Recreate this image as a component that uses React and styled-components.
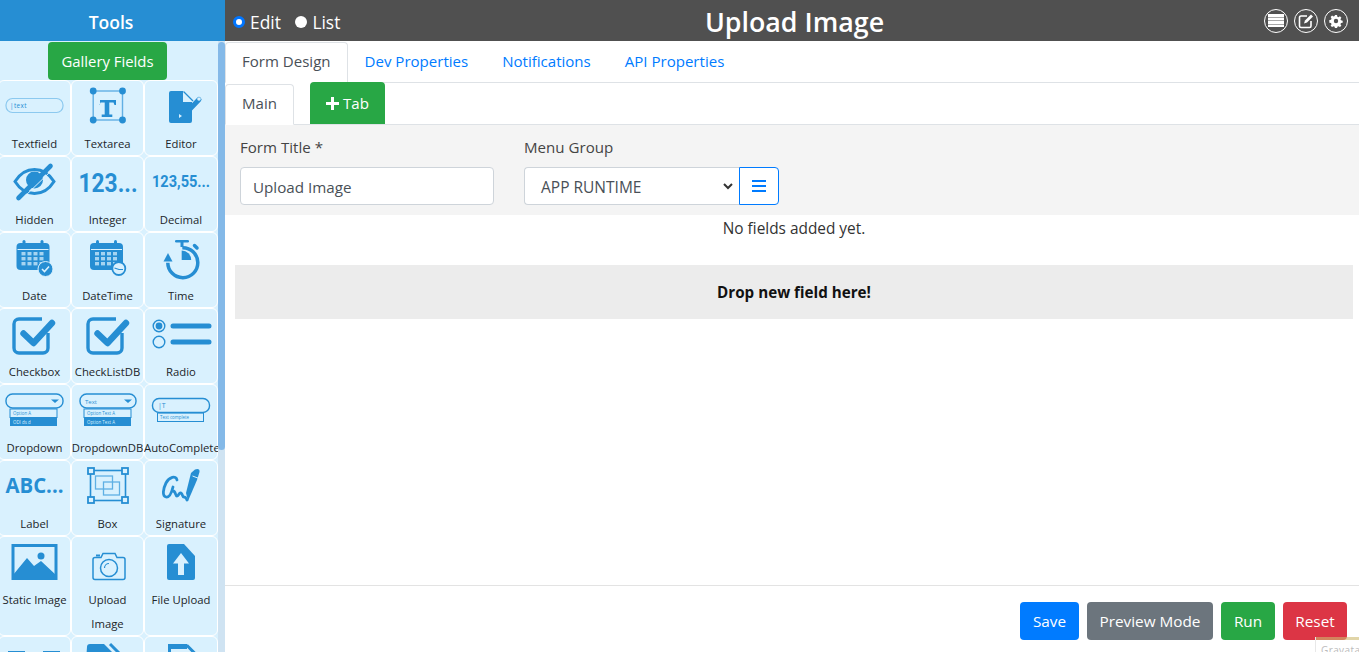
import React from "react";
import styled, { createGlobalStyle } from "styled-components";

const BLUE = "#268ed3";
const PALE = "#d9f1fe";
const FONT = `"Open Sans", "Noto Sans", "Liberation Sans", sans-serif`;

const GlobalStyle = createGlobalStyle`
  html, body { margin: 0; padding: 0; height: 100%; overflow: hidden; }
  body { font-family: ${FONT}; color: #212529; background: #fff; }
  * { box-sizing: border-box; }
`;

const Page = styled.div`
  display: flex;
  height: 100vh;
  position: relative;
  overflow: hidden;
`;

const Sidebar = styled.aside`
  width: 225px;
  flex: none;
  display: flex;
  flex-direction: column;
`;

const SidebarTitle = styled.div`
  height: 41px;
  flex: none;
  background: ${BLUE};
  color: #fff;
  font-size: 17.5px;
  font-weight: 600;
  line-height: 45px;
  text-align: center;
  padding-right: 3px;
`;

const SidebarBody = styled.div`
  flex: 1;
  min-height: 0;
  position: relative;
  overflow: hidden;
  background: ${PALE};
  padding-top: 1px;
`;

const ScrollTrack = styled.div`
  position: absolute;
  top: 0;
  right: 0;
  bottom: 0;
  width: 7px;
  background: #cfe3f2;
`;

const ScrollThumb = styled.div`
  height: 408px;
  margin-top: 1px;
  background: #84b9e8;
  border-radius: 4px;
`;

const GalleryButton = styled.button`
  display: block;
  width: 119px;
  height: 38px;
  margin: 0 0 0 48px;
  border: 0;
  border-radius: 4px;
  background: #28a745;
  color: #fff;
  font: 14.9px ${FONT};
`;

const FieldGrid = styled.div`
  display: grid;
  grid-template-columns: 73px 73px 74px;
  margin-left: -2px;
`;

const FieldCell = styled.div`
  min-height: 76px;
  border: 1px solid #fff;
  border-radius: 6px;
  background: ${PALE};
  text-align: center;
`;

const FieldIcon = styled.svg`
  display: block;
  width: 72px;
  height: 51px;
  margin: 0 auto;
  overflow: visible;
  position: relative;
  left: ${(p) => p.$shift || 0}px;
`;

const FieldLabel = styled.div`
  font-size: 11.3px;
  line-height: 24px;
  white-space: ${(p) => (p.$wrap ? "normal" : "nowrap")};
  color: #212529;
  margin: 0 -1px -1px;
  overflow: hidden;
  padding: ${(p) => (p.$wrap ? "0 8px" : "0")};
`;

const Main = styled.main`
  flex: 1;
  min-width: 0;
  display: flex;
  flex-direction: column;
`;

const TopBar = styled.header`
  height: 41px;
  flex: none;
  background: #505050;
  color: #fff;
  display: grid;
  grid-template-columns: 1fr auto 1fr;
  align-items: center;
  padding: 3px 3px 0 8px;
`;

const ModeGroup = styled.div`
  display: flex;
  align-items: center;
  font-size: 17.4px;
  gap: 14.5px;
  margin-top: -1px;
`;

const ModeOption = styled.label`
  display: flex;
  align-items: center;
  gap: 5px;
`;

const ModeDot = styled.span`
  width: 12px;
  height: 12px;
  border-radius: 50%;
  background: #fff;
  border: ${(p) => (p.$on ? "3px solid #0075ff" : "0")};
`;

const PageTitle = styled.h1`
  margin: 0;
  font-size: 26.8px;
  font-weight: 600;
  line-height: 1;
`;

const ToolIcons = styled.div`
  display: flex;
  justify-content: flex-end;
  gap: 6px;
  margin-right: 8px;
  margin-top: -3px;
`;

const RoundTool = styled.span`
  width: 24px;
  height: 24px;
  border: 1.5px solid #fff;
  border-radius: 50%;
  display: flex;
  align-items: center;
  justify-content: center;
`;

const TabRow = styled.nav`
  height: 42px;
  flex: none;
  display: flex;
  align-items: flex-end;
  border-bottom: 1px solid #dee2e6;
`;

const Tab = styled.span`
  height: 100%;
  padding: 0 16px ${(p) => (p.$active ? 3 : 2)}px;
  margin-bottom: ${(p) => (p.$active ? "-1px" : 0)};
  display: flex;
  align-items: center;
  font-size: 15.05px;
  color: ${(p) => (p.$active ? "#495057" : "#007bff")};
  background: ${(p) => (p.$active ? "#fff" : "transparent")};
  border: 1px solid ${(p) => (p.$active ? "#dee2e6" : "transparent")};
  border-bottom-color: ${(p) => (p.$active ? "#fff" : "transparent")};
  border-radius: 4px 4px 0 0;
`;

const AddTab = styled.button`
  width: 75px;
  height: 42px;
  margin-left: 16px;
  border: 0;
  border-radius: 4px 4px 0 0;
  background: #28a745;
  color: #fff;
  font: 15.05px ${FONT};
  display: flex;
  align-items: center;
  justify-content: center;
  gap: 4px;
`;

const FormPanel = styled.section`
  height: 90px;
  flex: none;
  background: #f4f4f4;
  display: flex;
  gap: 30px;
  padding: 11px 15px 0;
`;

const FormField = styled.div`
  width: ${(p) => p.$w}px;
`;

const FieldName = styled.div`
  font-size: 15.1px;
  line-height: 22px;
  margin-bottom: 9px;
  color: #444;
`;

const TextInput = styled.div`
  height: 38px;
  border: 1px solid #ced4da;
  border-radius: 4px;
  background: #fff;
  color: #495057;
  font-size: 15.2px;
  line-height: 38px;
  padding-left: 12px;
`;

const SelectRow = styled.div`
  display: flex;
`;

const SelectBox = styled.div`
  flex: 1;
  height: 38px;
  border: 1px solid #ced4da;
  border-right: 0;
  border-radius: 4px 0 0 4px;
  background: #fff;
  color: #495057;
  font-size: 15.5px;
  padding: 1px 6px 0 16px;
  display: flex;
  align-items: center;
  justify-content: space-between;
`;

const MenuButton = styled.span`
  width: 40px;
  height: 38px;
  border: 1px solid #007bff;
  border-radius: 0 4px 4px 0;
  background: #fff;
  display: flex;
  align-items: center;
  justify-content: center;
`;

const Canvas = styled.section`
  flex: 1;
  min-height: 0;
  padding: 0 6px 0 10px;
`;

const EmptyNote = styled.p`
  margin: 0;
  height: 50px;
  font-size: 15.4px;
  line-height: 28px;
  text-align: center;
  color: #333;
`;

const DropZone = styled.div`
  height: 54px;
  background: #ececec;
  color: #111;
  font-size: 15.2px;
  font-weight: 700;
  display: flex;
  align-items: center;
  justify-content: center;
`;

const Footer = styled.footer`
  height: 67px;
  flex: none;
  border-top: 1px solid #e3e3e3;
  display: flex;
  justify-content: flex-end;
  gap: 8px;
  padding: 16px 12px 0;
`;

const ActionButton = styled.button`
  width: ${(p) => p.$w}px;
  height: 38px;
  border: 0;
  border-radius: 4px;
  background: ${(p) => p.$bg};
  color: #fff;
  font: 15.3px ${FONT};
  padding: 0;
`;

const GravatarBadge = styled.div`
  position: absolute;
  right: 0;
  bottom: 0;
  width: 44px;
  height: 15px;
  background: linear-gradient(rgba(205, 185, 110, 0.6) 3px, rgba(255, 255, 255, 0.9) 3px);
  border-left: 1px solid #e8e8e8;
  color: #bbb;
  font-size: 10px;
  letter-spacing: 0.4px;
  line-height: 12px;
  padding: 7px 0 0 5px;
  overflow: hidden;
  white-space: nowrap;
`;

const Calendar = () => (
  <>
    <rect x="0" y="3" width="33" height="27" rx="4" fill={BLUE} />
    <rect x="6" y="0" width="3" height="6" rx="1.5" fill={BLUE} />
    <rect x="24" y="0" width="3" height="6" rx="1.5" fill={BLUE} />
    <rect x="1" y="9" width="31" height="1" fill={PALE} />
    {[0, 1, 2, 3].map((c) =>
      [0, 1, 2].map((r) => (
        <rect key={`${c}${r}`} x={5 + c * 6} y={12 + r * 5} width="4" height="3.4" fill="#a5d4f1" />
      ))
    )}
  </>
);

const DropList = ({ x, w, y, first, second }) => (
  <>
    <rect x={x} y={y} width={w} height="8.5" fill={PALE} stroke={BLUE} strokeWidth="1" />
    <text x={x + 3} y={y + 6} fontSize="4.4" fill={BLUE}>{first}</text>
    <rect x={x} y={y + 8.5} width={w} height="8.5" fill={BLUE} />
    <text x={x + 3} y={y + 14.5} fontSize="4.4" fill={PALE}>{second}</text>
  </>
);

const icons = {
  textfield: (
    <>
      <rect x="6" y="17.5" width="57" height="14" rx="6.5" fill="none" stroke="#8cc9ef" strokeWidth="1.2" />
      <text x="10" y="27" fontSize="6.4" fill={BLUE} letterSpacing=".4">|text</text>
    </>
  ),
  textarea: (
    <>
      <rect x="21.2" y="10" width="29.3" height="29" fill="none" stroke="#62b0e4" strokeWidth="1.4" />
      {[[21.2, 10], [50.5, 10], [21.2, 39], [50.5, 39]].map(([x, y]) => (
        <circle key={`${x}${y}`} cx={x} cy={y} r="3.4" fill={BLUE} />
      ))}
      <path d="M28 24v-5h16v5h-1.5l-1-2.5h-4.2v12h3v2.5h-10.600v-2.500h3v-12h-4.200l-1 2.500z" fill={BLUE} />
    </>
  ),
  editor: (
    <>
      <path d="M26 10h12v11h9v19a2 2 0 0 1-2 2h-19a2 2 0 0 1-2-2v-28a2 2 0 0 1 2-2z" fill={BLUE} />
      <path d="M38.500 10.500l9.500 9.500" fill="none" stroke={BLUE} strokeWidth="1.200" />
      <path d="M44 29l10-10.500" stroke={BLUE} strokeWidth="5" strokeLinecap="round" />
      <circle cx="54" cy="18" r="1.800" fill={PALE} />
      <path d="M34 33l3 2-3 2z" fill={PALE} />
    </>
  ),
  hidden: (
    <>
      <path d="M15 24.500c5-8 12-12 19.500-12s14.500 4 19.500 12c-5 8-12 12-19.500 12s-14.500-4-19.500-12z" fill="none" stroke={BLUE} strokeWidth="3" />
      <circle cx="34.500" cy="23" r="8.500" fill={BLUE} />
      <path d="M50.500 9L18.500 41" stroke={BLUE} strokeWidth="4.600" strokeLinecap="round" />
      <path d="M52.500 12.500L22 42" stroke={PALE} strokeWidth="1" />
    </>
  ),
  integer: <text x="6.500" y="34.500" fontFamily="Roboto" fontWeight="700" fontSize="25" fill={BLUE} textLength="59" lengthAdjust="spacingAndGlyphs">123...</text>,
  decimal: <text x="7" y="29.700" fontFamily="Roboto" fontWeight="700" fontSize="17" fill={BLUE} textLength="58" lengthAdjust="spacingAndGlyphs">123,55...</text>,
  date: (
    <>
      <g transform="translate(16.500 7)"><Calendar /></g>
      <circle cx="45.500" cy="36" r="7.500" fill={BLUE} stroke={PALE} strokeWidth="1" />
      <path d="M42 36l2.500 2.500 4.500-5" fill="none" stroke={PALE} strokeWidth="1.600" />
    </>
  ),
  datetime: (
    <>
      <g transform="translate(18 7)"><Calendar /></g>
      <circle cx="46.800" cy="35.500" r="6.500" fill={PALE} stroke={BLUE} strokeWidth="1.800" />
      <path d="M42.500 35l4.500 1.500h4" fill="none" stroke={BLUE} strokeWidth="1.200" />
    </>
  ),
  time: (
    <>
      <path d="M37.300 14.700A15 15 0 1 1 22.800 29.700" fill="none" stroke={BLUE} strokeWidth="3.500" />
      <path d="M23 20l-4.500 8.500h9z" fill={BLUE} />
      <rect x="30" y="7" width="14" height="2.600" rx="1.300" fill={BLUE} />
      <rect x="35.500" y="8" width="3" height="6" fill={BLUE} />
      <path d="M49.500 12.500l2.500 2.500" stroke={BLUE} strokeWidth="3.500" strokeLinecap="round" />
      <path d="M36.700 27v-9.500a9.500 9.500 0 0 1 9.500 9.500z" fill={BLUE} />
    </>
  ),
  checkbox: (
    <>
      <path d="M42 10H19a5 5 0 0 0-5 5v24a5 5 0 0 0 5 5h24a5 5 0 0 0 5-5V24" fill="none" stroke={BLUE} strokeWidth="3.400" />
      <path d="M23.500 24.500l10 9.500 18.500-20" fill="none" stroke={BLUE} strokeWidth="6.400" strokeLinecap="round" strokeLinejoin="round" />
    </>
  ),
  checklist: (
    <>
      <path d="M44 10H21a5 5 0 0 0-5 5v24a5 5 0 0 0 5 5h24a5 5 0 0 0 5-5V24" fill="none" stroke={BLUE} strokeWidth="3.400" />
      <path d="M25.500 24.500l10 9.500 18.500-20" fill="none" stroke={BLUE} strokeWidth="6.400" strokeLinecap="round" strokeLinejoin="round" />
    </>
  ),
  radio: (
    <>
      <circle cx="14" cy="17" r="5.800" fill="none" stroke={BLUE} strokeWidth="1.400" />
      <circle cx="14" cy="17" r="3.400" fill={BLUE} />
      <circle cx="14" cy="33" r="5.800" fill="none" stroke={BLUE} strokeWidth="1.400" />
      <path d="M28 17h36M28 33h36" stroke={BLUE} strokeWidth="5" strokeLinecap="round" />
    </>
  ),
  dropdown: (
    <>
      <rect x="6" y="9" width="57" height="14" rx="6.500" fill="none" stroke={BLUE} strokeWidth="1.400" />
      <path d="M51 14.500h8l-4 3.500z" fill={BLUE} />
      <DropList x={10} w={47} y={24} first="Option A" second="ODI ds d" />
    </>
  ),
  dropdowndb: (
    <>
      <rect x="8" y="9" width="56" height="14" rx="6.500" fill="none" stroke={BLUE} strokeWidth="1.400" />
      <text x="13" y="18.500" fontSize="6" fill={BLUE}>Text</text>
      <path d="M52 14.500h8l-4 3.500z" fill={BLUE} />
      <DropList x={12} w={47} y={24} first="Option Text A" second="Option Text A" />
    </>
  ),
  autocomplete: (
    <>
      <rect x="7.500" y="13.500" width="57" height="14" rx="6.500" fill="none" stroke={BLUE} strokeWidth="1.400" />
      <text x="13" y="23" fontSize="7" fill={BLUE}>|T</text>
      <rect x="12.500" y="28" width="46" height="8.500" fill="none" stroke={BLUE} strokeWidth="1" />
      <text x="15" y="34" fontSize="4.400" fill={BLUE}>Text complete</text>
    </>
  ),
  label: <text x="5.500" y="32" fontWeight="700" fontSize="21" fill={BLUE} textLength="58" lengthAdjust="spacingAndGlyphs">ABC...</text>,
  box: (
    <>
      <rect x="18.500" y="9.500" width="35" height="30" fill="none" stroke={BLUE} strokeWidth="1.600" />
      {[[16, 7], [50, 7], [16, 36], [50, 36]].map(([x, y]) => (
        <rect key={`${x}${y}`} x={x} y={y} width="6" height="6" fill={PALE} stroke={BLUE} strokeWidth="1.800" />
      ))}
      <rect x="23.500" y="15" width="17" height="13" fill="none" stroke="#5fb0e4" strokeWidth="1.300" />
      <rect x="31.500" y="21" width="16" height="13" fill="none" stroke="#5fb0e4" strokeWidth="1.300" />
    </>
  ),
  signature: (
    <>
      <path d="M46 12l4-3.500q5-1.500 4.500 2.500l-2.500 8-9 21-2-8z" fill={BLUE} />
      <path d="M47.500 15l6.500 2.500" stroke={PALE} strokeWidth="1" />
      <path d="M32 19c-1-5-8-3-11 3s-4 13 0 14 6-6 7-10M28 30c3 0 2 5 4 5s2-4 4-3 1 4 3 4 2 1 3 3" fill="none" stroke={BLUE} strokeWidth="2.800" strokeLinecap="round" strokeLinejoin="round" />
    </>
  ),
  staticimage: (
    <>
      <rect x="13" y="8.500" width="43" height="33" fill="none" stroke={BLUE} strokeWidth="3" />
      <path d="M13 38l14-17 7 8 7-5 15 14v3.500H13z" fill={BLUE} />
      <circle cx="41" cy="19" r="3.500" fill={BLUE} />
    </>
  ),
  camera: (
    <>
      <path d="M23 20.500h6l2-4h12l2 4h6a2 2 0 0 1 2 2v18a2 2 0 0 1-2 2H23a2 2 0 0 1-2-2v-18a2 2 0 0 1 2-2z" fill="none" stroke={BLUE} strokeWidth="1.500" />
      <circle cx="37" cy="31" r="8.500" fill="none" stroke={BLUE} strokeWidth="1.500" />
      <path d="M32.500 31a4.500 4.500 0 0 1 4.500-4.500" fill="none" stroke={BLUE} strokeWidth="1.200" />
      <rect x="24" y="17.500" width="4" height="2" fill={BLUE} />
    </>
  ),
  fileupload: (
    <>
      <path d="M24 7h15l11 12v22a2 2 0 0 1-2 2H24a2 2 0 0 1-2-2V9a2 2 0 0 1 2-2z" fill={BLUE} />
      <path d="M36 16l8 10.500h-5V38h-6V26.500h-5z" fill={PALE} />
    </>
  ),
  more1: <path d="M8 15.500h17M43 15.500h17" stroke={BLUE} strokeWidth="3" />,
  more2: (
    <>
      <path d="M15 10a3 3 0 0 1 3-3h14l11 11v20H13z" fill={BLUE} />
      <path d="M38 7l9 9" stroke={BLUE} strokeWidth="3" fill="none" />
    </>
  ),
  more3: (
    <>
      <path d="M24.500 9h18l8 8v26h-26z" fill="none" stroke={BLUE} strokeWidth="3" />
      <rect x="23" y="7" width="19" height="5" fill={BLUE} />
    </>
  ),
};

const fields = [
  ["Textfield", "textfield"], ["Textarea", "textarea"], ["Editor", "editor"],
  ["Hidden", "hidden"], ["Integer", "integer"], ["Decimal", "decimal"],
  ["Date", "date"], ["DateTime", "datetime"], ["Time", "time"],
  ["Checkbox", "checkbox"], ["CheckListDB", "checklist"], ["Radio", "radio"],
  ["Dropdown", "dropdown"], ["DropdownDB", "dropdowndb"], ["AutoComplete", "autocomplete"],
  ["Label", "label"], ["Box", "box"], ["Signature", "signature"],
  ["Static Image", "staticimage"], ["Upload Image", "camera", true], ["File Upload", "fileupload"],
  ["", "more1"], ["", "more2"], ["", "more3"],
];

const FieldItem = ({ label, icon, wrap, shift }) => (
  <FieldCell>
    <FieldIcon viewBox="0 0 72 51" fontFamily={FONT} $shift={shift}>{icons[icon]}</FieldIcon>
    {label && <FieldLabel $wrap={wrap}>{label}</FieldLabel>}
  </FieldCell>
);

export default function App() {
  return (
    <Page>
      <GlobalStyle />
      <Sidebar>
        <SidebarTitle>Tools</SidebarTitle>
        <SidebarBody>
          <GalleryButton>Gallery Fields</GalleryButton>
          <FieldGrid>
            {fields.map(([label, icon, wrap], i) => (
              <FieldItem key={icon + i} label={label} icon={icon} wrap={wrap} shift={i % 3 === 0 ? 1 : 0} />
            ))}
          </FieldGrid>
          <ScrollTrack>
            <ScrollThumb />
          </ScrollTrack>
        </SidebarBody>
      </Sidebar>
      <Main>
        <TopBar>
          <ModeGroup>
            <ModeOption><ModeDot $on />Edit</ModeOption>
            <ModeOption><ModeDot />List</ModeOption>
          </ModeGroup>
          <PageTitle>Upload Image</PageTitle>
          <ToolIcons>
            <RoundTool>
              <svg width="16" height="13" viewBox="0 0 16 13">
                <path d="M0 0h16v3H0zM0 3.500h16v3H0zM0 7h16v3H0zM0 10.500h16V13H0z" fill="#fff" />
              </svg>
            </RoundTool>
            <RoundTool>
              <svg width="16" height="16" viewBox="0 0 16 16">
                <path d="M9 3H3a1.500 1.500 0 0 0-1.500 1.500v8.500A1.500 1.500 0 0 0 3 14.500h8.500A1.500 1.500 0 0 0 13 13V8" fill="none" stroke="#fff" strokeWidth="1.600" />
                <path d="M6 10.500l1-3 6-6 2 2-6 6z" fill="#fff" />
              </svg>
            </RoundTool>
            <RoundTool>
              <svg width="14" height="14" viewBox="0 0 14 14">
                <path d="M5.800 0h2.400l.4 2 1.300.6 1.700-1.100 1.700 1.700-1.100 1.700.6 1.300 2 .4v2.400l-2 .4-.6 1.300 1.100 1.700-1.700 1.700-1.700-1.100-1.300.6-.4 2H5.800l-.4-2-1.300-.6-1.700 1.100-1.700-1.700 1.100-1.700-.6-1.300-2-.4V5.800l2-.4.6-1.300-1.100-1.700 1.700-1.700 1.700 1.100 1.300-.6z" fill="#fff" transform="translate(1 1) scale(.857)" />
                <circle cx="7" cy="7" r="2.200" fill="#505050" />
              </svg>
            </RoundTool>
          </ToolIcons>
        </TopBar>
        <TabRow>
          <Tab $active>Form Design</Tab>
          <Tab>Dev Properties</Tab>
          <Tab>Notifications</Tab>
          <Tab>API Properties</Tab>
        </TabRow>
        <TabRow>
          <Tab $active>Main</Tab>
          <AddTab>
            <svg width="13" height="13" viewBox="0 0 13 13">
              <path d="M5 0h3v5h5v3H8v5H5V8H0V5h5z" fill="#fff" />
            </svg>
            Tab
          </AddTab>
        </TabRow>
        <FormPanel>
          <FormField $w={254}>
            <FieldName>Form Title *</FieldName>
            <TextInput>Upload Image</TextInput>
          </FormField>
          <FormField $w={255}>
            <FieldName>Menu Group</FieldName>
            <SelectRow>
              <SelectBox>
                APP RUNTIME
                <svg width="10" height="7" viewBox="0 0 10 7">
                  <path d="M1 1l4 4 4-4" fill="none" stroke="#333" strokeWidth="2" />
                </svg>
              </SelectBox>
              <MenuButton>
                <svg width="14" height="12" viewBox="0 0 14 12">
                  <path d="M0 0h14v2H0zM0 5h14v2H0zM0 10h14v2H0z" fill="#007bff" />
                </svg>
              </MenuButton>
            </SelectRow>
          </FormField>
        </FormPanel>
        <Canvas>
          <EmptyNote>No fields added yet.</EmptyNote>
          <DropZone>Drop new field here!</DropZone>
        </Canvas>
        <Footer>
          <ActionButton $w={59} $bg="#007bff">Save</ActionButton>
          <ActionButton $w={126} $bg="#6c757d">Preview Mode</ActionButton>
          <ActionButton $w={54} $bg="#28a745">Run</ActionButton>
          <ActionButton $w={64} $bg="#dc3545">Reset</ActionButton>
        </Footer>
      </Main>
      <GravatarBadge>Gravatar</GravatarBadge>
    </Page>
  );
}
